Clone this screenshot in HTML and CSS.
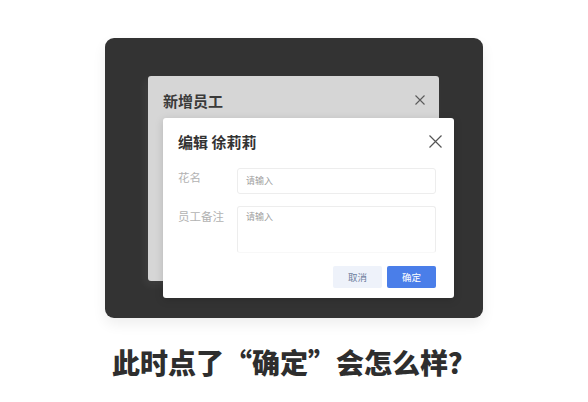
FILE: index.html
```html
<!DOCTYPE html>
<html lang="zh-CN">
<head>
    <meta charset="UTF-8">
    <meta name="viewport" content="width=device-width, initial-scale=1.0">
    <title>此时点了确定会怎么样</title>
    <link rel="stylesheet" href="styles.css">
</head>
<body>
    <div class="stage">
        <div class="back-dialog">
            <div class="back-header">
                <span class="back-title">新增员工</span>
                <svg class="close-small" width="10" height="10" viewBox="0 0 10 10">
                    <path d="M0.5 0.5 L9.5 9.5 M9.5 0.5 L0.5 9.5" stroke="#5a5a5a" stroke-width="1.1" fill="none"/>
                </svg>
            </div>
        </div>

        <div class="front-dialog">
            <div class="front-header">
                <span class="front-title">编辑 徐莉莉</span>
                <svg class="close-big" width="13" height="13" viewBox="0 0 13 13">
                    <path d="M0.5 0.5 L12.5 12.5 M12.5 0.5 L0.5 12.5" stroke="#555" stroke-width="1.2" fill="none"/>
                </svg>
            </div>
            <div class="form-row">
                <label class="field-label">花名</label>
                <div class="field-input">请输入</div>
            </div>
            <div class="form-row row-note">
                <label class="field-label">员工备注</label>
                <div class="field-input field-area">请输入</div>
            </div>
            <div class="footer">
                <button class="btn btn-cancel">取消</button>
                <button class="btn btn-ok">确定</button>
            </div>
        </div>
    </div>

    <h1 class="caption">此时点了“确定”会怎么样？</h1>
</body>
</html>
```

FILE: styles.css
```css
body {
    margin: 0;
    background-color: #fff;
    font-family: "Noto Sans CJK SC", "Noto Sans", sans-serif;
    color: #333;
}
.stage {
    position: relative;
    width: 378px;
    height: 280px;
    margin: 38px auto 0;
    padding-top: 38px;
    box-sizing: border-box;
    background-color: #333;
    border-radius: 9px;
    box-shadow: 0 6px 14px rgba(0, 0, 0, 0.07);
}
.back-dialog {
    width: 291px;
    height: 205px;
    margin-left: 43px;
    background-color: #d6d6d6;
    border-radius: 3px;
    box-shadow: -3px 4px 10px rgba(255, 255, 255, 0.06);
}
.back-header {
    height: 48px;
    display: flex;
    align-items: center;
    justify-content: space-between;
    padding: 0 14px 0 15px;
}
.back-title {
    font-size: 15px;
    font-weight: bold;
    color: #3a3a3a;
}
.front-dialog {
    position: absolute;
    left: 58px;
    top: 80px;
    width: 291px;
    height: 180px;
    box-sizing: border-box;
    padding: 0 18px 0 15px;
    background-color: #fff;
    border-radius: 3px;
    box-shadow: 0 2px 8px rgba(0, 0, 0, 0.15);
}
.front-header {
    height: 46px;
    display: flex;
    align-items: center;
    justify-content: space-between;
    margin-right: -6px;
}
.front-title {
    font-size: 15px;
    font-weight: bold;
    color: #333;
}
.form-row {
    display: flex;
    margin-top: 4px;
}
.row-note {
    margin-top: 12px;
}
.field-label {
    width: 59px;
    flex-shrink: 0;
    font-size: 11.5px;
    line-height: 16px;
    padding-top: 1px;
    color: #b2b2b2;
}
.row-note .field-label {
    padding-top: 2px;
}
.field-input {
    flex: 1;
    height: 26px;
    box-sizing: border-box;
    border: 1px solid #ededed;
    border-radius: 3px;
    padding: 0 8px;
    font-size: 9px;
    line-height: 24px;
    color: #a0a0a0;
}
.field-area {
    height: 47px;
    line-height: 20px;
    border-bottom-color: #f8f8f8;
}
.footer {
    display: flex;
    justify-content: flex-end;
    gap: 5px;
    margin-top: 13px;
}
.btn {
    width: 49px;
    height: 22px;
    border: none;
    border-radius: 2px;
    font-family: inherit;
    font-size: 9.5px;
    padding: 0;
}
.btn-cancel {
    background-color: #eef2fa;
    color: #6f7f9e;
}
.btn-ok {
    background-color: #4a7ee9;
    color: #fff;
}
.caption {
    margin: 28px 0 0;
    text-align: center;
    font-size: 28px;
    font-weight: 900;
    line-height: 32px;
    color: #2e2e2e;
}
```
